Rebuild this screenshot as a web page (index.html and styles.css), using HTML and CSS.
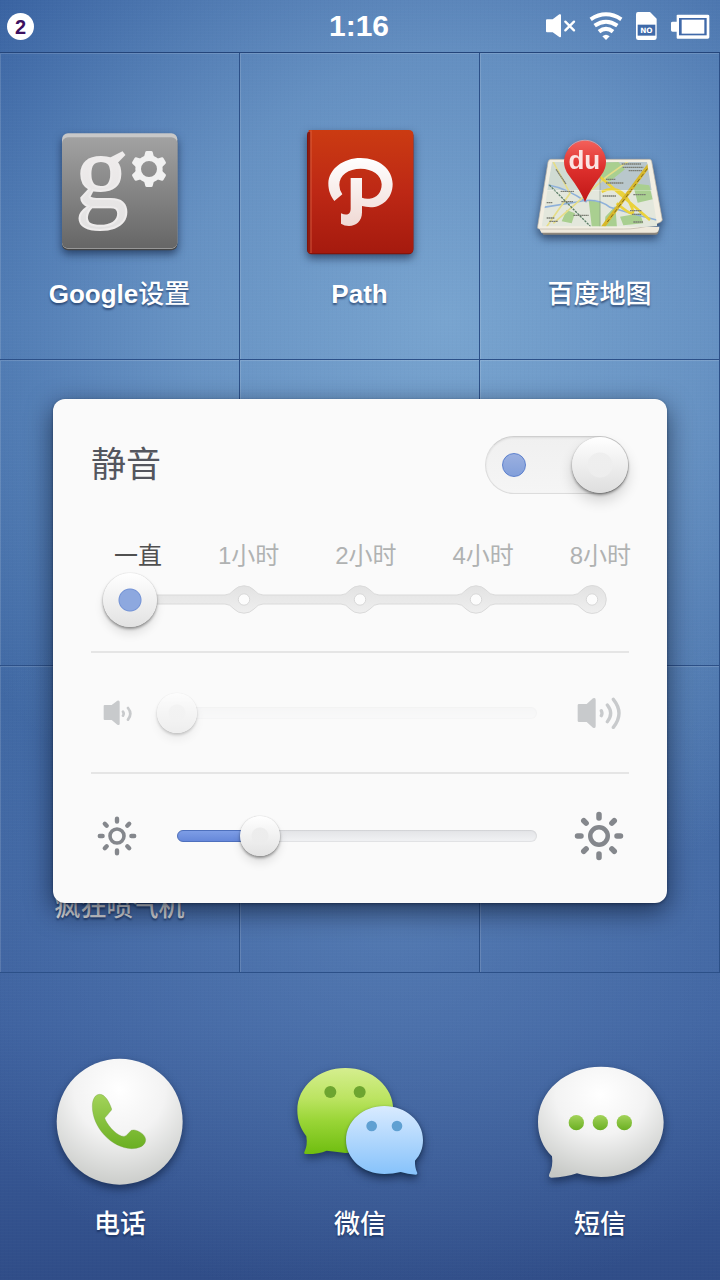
FILE: index.html
```html
<!DOCTYPE html>
<html lang="zh-CN">
<head>
<meta charset="utf-8">
<meta name="viewport" content="width=device-width, initial-scale=1">
<title>静音</title>
<link rel="stylesheet" href="styles.css">
</head>
<body>
<div class="screen">
  <header class="status">
    <span class="badge">2</span>
    <time class="clock">1:16</time>
    <div class="status-icons">
      <svg width="32" height="26" viewBox="48 38 96 78" fill="#fff" role="img" aria-label="静音">
        <path d="M54 57h17l20-15q5-2 5 3v63q0 4-5 2L71 96H54q-3 0-3-3V60q0-3 3-3z"/>
        <path d="M109 64l26 26M135 64l-26 26" stroke="#fff" stroke-width="7" stroke-linecap="round"/>
      </svg>
      <svg width="36" height="30" viewBox="172 33 108 90" fill="none" stroke="#fff" stroke-width="12" role="img" aria-label="Wi-Fi">
        <path d="M180 58q46-30 92 0"/>
        <path d="M192 77q34-24 68 0"/>
        <path d="M205 95q21-17 42 0"/>
        <path d="M215 109q11-10 22 0l-11 11z" fill="#fff" stroke="none"/>
      </svg>
      <svg width="23" height="30" viewBox="315 33 69 90" role="img" aria-label="SIM">
        <path d="M324 36h36l20 20v57q0 7-7 7h-48q-7 0-7-7V43q0-7 6-7z" fill="#fff"/>
        <path d="M323 74h53v33h-53z" fill="#3f6aa9"/>
        <text class="sim-text" x="349" y="99" text-anchor="middle">NO</text>
      </svg>
      <svg width="42" height="27" viewBox="417 37 126 81" role="img" aria-label="电池">
        <path d="M440 44q0-2 3-2h90q5 0 5 4v64q0 4-5 4h-90q-3 0-3-3V93h-12q-5 0-5-4V67q0-4 5-4h12z" fill="#fff"/>
        <path d="M447 52h83v52h-83z" fill="#4069a9"/>
        <path d="M455 57h68v42h-68z" fill="#fff"/>
      </svg>
    </div>
  </header>

  <main class="apps">
    <a class="tile" href="#google">
      <svg class="icon" viewBox="54 30 432 432" aria-hidden="true">
        <defs>
          <linearGradient id="gp" x2="0" y2="1"><stop stop-color="#a2a2a2"/><stop offset="1" stop-color="#666"/></linearGradient>
          <linearGradient id="gw" x2="0" y2="1"><stop stop-color="#f6f2f2"/><stop offset="1" stop-color="#e2e1e1"/></linearGradient>
        </defs>
        <rect x="96" y="74" width="346" height="347" rx="18" fill="#454545"/>
        <rect x="96" y="70" width="346" height="346" rx="18" fill="#c8c8c8"/>
        <rect x="96" y="82" width="346" height="333" rx="18" fill="url(#gp)"/>
        <text class="g-mark" x="135" y="292" fill="url(#gw)" stroke="#eeecec" stroke-width="6">g</text>
        <g transform="translate(357 177)" fill="#f1f1f1">
          <path fill-rule="evenodd" d="M0-41A41 41 0 1 0 0 41A41 41 0 1 0 0-41zM0-24A24 24 0 1 1 0 24A24 24 0 1 1 0-24z"/>
          <path id="tooth" d="M-15-36L-11-51Q-10-54-7-54H7Q10-54 11-51L15-36L0-32z"/>
          <use href="#tooth" transform="rotate(60)"/><use href="#tooth" transform="rotate(120)"/><use href="#tooth" transform="rotate(180)"/><use href="#tooth" transform="rotate(240)"/><use href="#tooth" transform="rotate(300)"/>
        </g>
      </svg>
      <span class="name latin">Google<span class="han">设置</span></span>
    </a>
    <a class="tile" href="#path">
      <svg class="icon" viewBox="24 30 432 432" aria-hidden="true">
        <defs>
          <linearGradient id="pr" x2="0" y2="1"><stop stop-color="#cb3b12"/><stop offset=".5" stop-color="#bd2815"/><stop offset="1" stop-color="#a51a0e"/></linearGradient>
          <linearGradient id="pw" x2="0" y2="1"><stop stop-color="#fff"/><stop offset="1" stop-color="#f0d9d4"/></linearGradient>
        </defs>
        <rect x="81" y="62" width="319" height="371" rx="14" fill="#7b1209"/>
        <path d="M86 60H386q14 0 14 14V416q0 14-14 14H86z" fill="url(#pr)"/>
        <path d="M83 66h8v360h-8z" fill="#8d1a10"/>
        <path d="M93 61v368" stroke="#e7714f" stroke-width="2"/>
        <path fill="url(#pw)" d="M163 273C151 257 145 242 145 220C147 176 190 144 242 144C297 144 338 178 338 222C338 266 305 292 272 292Q257 291 246 288V307C246 334 228 348 207 348Q193 348 183 341V310C201 318 212 313 212 296V204H246V263C252 266 260 267 268 266C291 265 305 247 305 223C304 195 277 176 242 176C205 176 178 195 178 225Q178 240 187 253z"/>
      </svg>
      <span class="name latin">Path</span>
    </a>
    <a class="tile" href="#map">
      <svg class="icon" viewBox="24 0 432 432" aria-hidden="true">
        <defs>
          <clipPath id="mc"><path d="M96 126L381 126L412 318Q370 324 310 319H65z"/></clipPath>
          <linearGradient id="pin" x2="0" y2="1"><stop stop-color="#f3605a"/><stop offset=".45" stop-color="#de302d"/><stop offset="1" stop-color="#c01616"/></linearGradient>
        </defs>
        <path d="M60 330L70 344H408Q417 342 416 326z" fill="#8d867c"/>
        <path d="M56 322L64 338H404Q418 338 418 320z" fill="#efe9dc"/>
        <path d="M92 118H388Q394 118 395 124L427 300Q425 308 400 314Q350 328 310 327H58Q51 327 53 319L84 126Q86 118 92 118z" fill="#f2eee2" stroke="#bbb2a4" stroke-width="2"/>
        <g clip-path="url(#mc)">
          <path d="M50 110H430V340H50z" fill="#e3e7dc"/>
          <path d="M96 126H240V210H80z" fill="#d0dbd3"/><path d="M240 126H400V210H240z" fill="#b9c7cc"/>
          <path d="M215 130l80-4 20 22-45 36-20-8zM206 240l35 6v80h-25zM256 290l30-32 5 65h-38zM338 190l50 6 10 42-45 10zM300 290l60-10 10 30-60 6zM140 270l25 10-10 30-30-6z" fill="#a9cf90"/>
          <path d="M70 262L170 246Q230 230 270 262L340 282L410 300M85 195Q140 205 200 246" fill="none" stroke="#8eb1da" stroke-width="5"/>
          <path d="M100 126L150 220L80 320M100 310L260 170L330 120" fill="none" stroke="#e6dd88" stroke-width="5"/>
          <path d="M240 170L390 300M245 215Q300 190 330 250T290 250" fill="none" stroke="#ead23c" stroke-width="8"/>
          <path d="M388 134L245 326" stroke="#d8b82a" stroke-width="11"/>
          <path d="M382 146L262 306" stroke="#806b25" stroke-width="3" stroke-dasharray="12 7"/>
          <path d="M88 195L212 320" stroke="#5d7f68" stroke-width="4" stroke-dasharray="7 3"/>
          <path d="M108 148L138 192M305 132h58M308 142h62M326 152h40M258 178h28M258 189h52M248 228h40M340 224h38M122 214h40M124 245h36M160 286h46M80 248h18M80 294h24M330 272h34M336 283h28M340 306h30M88 304h26" stroke="#7b7e74" stroke-width="4" stroke-dasharray="5 1"/>
          <path d="M240 126V330" stroke="#7f8b83" stroke-width="3" opacity=".5"/>
          <path d="M76 211H405" stroke="#fff" stroke-width="2" opacity=".5"/>
        </g>
        <path d="M195 246L240 236L204 244z" fill="#444" opacity=".5"/>
        <path d="M195 246Q183 214 146 165A63 63 0 1 1 244 165Q207 214 195 246z" fill="url(#pin)"/>
        <path d="M145 86A62 62 0 0 1 245 86" fill="none" stroke="#ffaaa2" stroke-width="3" opacity=".7"/>
        <text class="du-mark" x="193" y="146" text-anchor="middle">du</text>
      </svg>
      <span class="name">百度地图</span>
    </a>
    <div class="tile"></div><div class="tile"></div><div class="tile"></div>
    <a class="tile" href="#game"><span class="icon"></span><span class="name dim">疯狂喷气机</span></a>
    <div class="tile"></div><div class="tile"></div>
  </main>

  <nav class="dock">
    <a class="tile" href="#phone">
      <svg class="icon" viewBox="54 30 432 432" aria-hidden="true">
        <defs>
          <radialGradient id="wb" cx=".5" cy=".25" r=".8"><stop stop-color="#fff"/><stop offset=".45" stop-color="#f3f3f3"/><stop offset="1" stop-color="#c6c8c5"/></radialGradient>
          <linearGradient id="gr" x2="0" y2="1"><stop stop-color="#a3d35a"/><stop offset="1" stop-color="#6aaf22"/></linearGradient>
        </defs>
        <circle cx="269" cy="245" r="189" fill="url(#wb)"/>
        <path d="M209 163C226 163 238 187 245 207C246 211 238 216 234 223Q227 231 224 234C229 251 254 281 274 288Q283 291 288 287L304 271Q312 268 321 272C336 278 346 287 347 299C347 318 325 326 305 326C244 324 187 262 187 199C187 179 195 163 209 163z" fill="url(#gr)" stroke="#719b40" stroke-width="1"/>
      </svg>
      <span class="name">电话</span>
    </a>
    <a class="tile" href="#wechat">
      <svg class="icon" viewBox="24 30 432 432" aria-hidden="true">
        <defs>
          <linearGradient id="wg" x2="0" y2="1"><stop stop-color="#d5ee8f"/><stop offset=".35" stop-color="#bce462"/><stop offset=".6" stop-color="#9bd638"/><stop offset="1" stop-color="#6fbd10"/></linearGradient>
          <linearGradient id="wl" x2="0" y2="1"><stop stop-color="#d9ebff"/><stop offset="1" stop-color="#86c2fb"/></linearGradient>
        </defs>
        <path d="M196 84C276 84 340 139 340 211C340 284 276 339 196 339Q164 334 140 332Q115 343 76 342Q70 341 74 334Q83 316 79 289C61 266 52 241 52 211C52 139 116 84 196 84z" fill="url(#wg)"/>
        <circle cx="151" cy="156" r="18" fill="#6da530"/><circle cx="239" cy="156" r="18" fill="#6da530"/>
        <path class="bubble" d="M313 198C377 198 429 243 429 300C429 326 420 346 405 362Q404 383 412 399Q413 404 407 404Q383 402 362 396Q339 402 313 402C249 402 198 357 198 300C198 243 249 198 313 198z" fill="url(#wl)"/>
        <circle cx="275" cy="258" r="16" fill="#5fa0d2"/><circle cx="351" cy="258" r="16" fill="#5fa0d2"/>
      </svg>
      <span class="name">微信</span>
    </a>
    <a class="tile" href="#sms">
      <svg class="icon" viewBox="24 30 432 432" aria-hidden="true">
        <path d="M243 80C347 80 431 154 431 246C431 338 347 411 243 411Q203 410 171 400Q138 412 94 413Q84 411 88 402Q100 378 96 349C68 321 54 286 54 246C54 154 138 80 243 80z" fill="url(#wb)"/>
        <g fill="url(#gr)"><circle cx="169" cy="248" r="23"/><circle cx="241" cy="248" r="23"/><circle cx="313" cy="248" r="23"/></g>
      </svg>
      <span class="name">短信</span>
    </a>
  </nav>

  <div class="overlay">
    <section class="panel" role="dialog" aria-labelledby="mute-title">
      <div class="panel-head">
        <label class="title" id="mute-title" for="mute">静音</label>
        <input class="switch" id="mute" type="checkbox" checked>
      </div>
      <div class="duration">
        <ul class="stops" id="stops">
          <li class="current">一直</li><li>1小时</li><li>2小时</li><li>4小时</li><li>8小时</li>
        </ul>
        <div class="stepper">
          <svg class="rail-stops" viewBox="0 0 516 30" aria-hidden="true">
            <defs><linearGradient id="rl" x2="0" y2="1"><stop stop-color="#e2e2e2"/><stop offset="1" stop-color="#efefef"/></linearGradient></defs>
            <path fill="url(#rl)" stroke="#dadada" d="M27 10H122Q127 10 131 5A14 14 0 0 1 151 5Q155 10 160 10H238Q243 10 247 5A14 14 0 0 1 267 5Q271 10 276 10H354Q359 10 363 5A14 14 0 0 1 383 5Q387 10 392 10H470Q475 10 479 5A14 14 0 1 1 479 24Q475 19 470 19H392Q387 19 383 24A14 14 0 0 1 363 24Q359 19 354 19H276Q271 19 267 24A14 14 0 0 1 247 24Q243 19 238 19H160Q155 19 151 24A14 14 0 0 1 131 24Q127 19 122 19H27z"/>
            <g fill="#fcfcfc" stroke="#d8d8d8"><circle cx="141" cy="14.5" r="5.7"/><circle cx="257" cy="14.5" r="5.7"/><circle cx="373" cy="14.5" r="5.7"/><circle cx="489" cy="14.5" r="5.7"/></g>
          </svg>
          <input class="range large" type="range" min="0" max="4" value="0" aria-label="静音时长" aria-describedby="stops">
        </div>
      </div>
      <div class="row volume">
        <svg width="32" height="26" viewBox="184 180 96 78" fill="#c8cacc" aria-hidden="true">
          <path d="M195 195h21l17-13q7-2 7 4v65q0 6-7 3l-17-14h-21q-3 0-3-3v-39q0-3 3-3z"/>
          <path d="M250 215q4 6 0 12M265 204q14 17 0 35" fill="none" stroke="#c8cacc" stroke-width="8" stroke-linecap="round"/>
        </svg>
        <div class="slider">
          <span class="rail"></span>
          <input class="range" type="range" value="0" disabled aria-label="音量">
        </div>
        <svg width="48" height="34" viewBox="646 168 144 102" fill="#c8cacc" aria-hidden="true">
          <path d="M658 192h23l19-17q8-4 8 4v80q0 8-8 4l-19-17h-23q-4 0-4-4v-46q0-4 4-4z"/>
          <path d="M725 212q4 8 0 15M743 195q20 25 0 50M761 178q34 42 0 84" fill="none" stroke="#c8cacc" stroke-width="10" stroke-linecap="round"/>
        </svg>
      </div>
      <div class="row brightness">
        <svg width="40" height="40" viewBox="-20 -20 40 40" aria-hidden="true">
          <g id="sun" fill="none" stroke="#84878c">
            <circle r="7" stroke-width="3.6"/>
            <path d="M0-17.2V-14.4M0 17.2V14.4M-17.2 0H-14.4M17.2 0H14.4M-12.2-12.2l1.9 1.9M12.2-12.2l-1.9 1.9M-12.2 12.2l1.9-1.9M12.2 12.2l-1.9-1.9" stroke-width="4.4" stroke-linecap="round"/>
          </g>
        </svg>
        <div class="slider">
          <span class="rail"><span class="fill" style="width:23%"></span></span>
          <input class="range" type="range" value="23" aria-label="亮度">
        </div>
        <svg width="50" height="50" viewBox="-20 -20 40 40" aria-hidden="true"><use href="#sun"/></svg>
      </div>
    </section>
  </div>
</div>
</body>
</html>
```
FILE: styles.css
```css
* { box-sizing: border-box; }

body {
  margin: 0;
  font-family: "Liberation Sans", "Noto Sans CJK SC", sans-serif;
}

.screen {
  position: relative;
  display: flex;
  flex-direction: column;
  min-height: 100vh;
  background:
    repeating-linear-gradient(0deg, rgba(255,255,255,.012) 0 1px, transparent 1px 3px),
    repeating-linear-gradient(90deg, rgba(0,20,60,.012) 0 1px, transparent 1px 4px),
    radial-gradient(ellipse 80% 46% at 62% 25%, rgba(130,174,214,.85), rgba(124,168,210,.65) 45%, transparent),
    radial-gradient(ellipse 70% 30% at 55% 72%, rgba(100,140,192,.55), transparent),
    linear-gradient(#355e9e, #416ca9 25%, #4068a3 55%, #3c5f9d 80%, #304d88);
}

.status {
  display: grid;
  grid-template-columns: 1fr auto 1fr;
  align-items: center;
  height: 53px;
  padding: 0 9px 0 7px;
  border-bottom: 1px solid #24457a;
}

.badge {
  width: 27px;
  height: 27px;
  border-radius: 50%;
  background: #fff;
  color: #3c1060;
  font-size: 20px;
  font-weight: bold;
  line-height: 28px;
  text-align: center;
}

.clock {
  color: #fff;
  font-size: 30px;
  font-weight: bold;
  line-height: 36px;
}

.status-icons {
  display: flex;
  justify-content: flex-end;
  align-items: center;
  gap: 11px;
}

.sim-text {
  font-family: "DejaVu Sans", sans-serif;
  font-size: 22px;
  font-weight: bold;
  fill: #fff;
}

.apps {
  flex: 1;
  display: grid;
  grid-template-columns: repeat(3, 1fr);
  grid-template-rows: repeat(3, 1fr);
}

.tile {
  display: flex;
  flex-direction: column;
  align-items: center;
  gap: 12px;
  padding-top: 67px;
  color: #fff;
  text-decoration: none;
}

.apps .tile {
  border-right: 1px solid #2c5088;
  border-bottom: 1px solid #2c5088;
  box-shadow: inset 1px 1px rgba(255,255,255,.14);
}

.icon {
  width: 144px;
  height: 144px;
  overflow: visible;
  filter: drop-shadow(0 4px 4px rgba(10,25,55,.6));
}

.name {
  font-size: 26px;
  font-weight: 500;
  line-height: 36px;
  text-shadow: 0 2px 2px rgba(10,30,70,.55);
}

.latin { font-weight: bold; }
.han { font-weight: 500; }
.dim { color: #dcdcdc; }

.g-mark {
  font-family: "Liberation Serif", serif;
  font-size: 320px;
}

.du-mark {
  font-size: 78px;
  font-weight: bold;
  fill: #fbe4e2;
}

.bubble { filter: drop-shadow(0 3px 5px rgba(10,40,60,.5)); }

.dock {
  display: grid;
  grid-template-columns: repeat(3, 1fr);
  height: 307px;
}

.dock .tile { padding-top: 77px; }

.overlay {
  position: absolute;
  inset: 0;
  display: flex;
  align-items: center;
  padding: 22px 53px 0;
}

.panel {
  flex: 1;
  padding: 37px 38px 5px;
  border-radius: 12px;
  background: #fafafa;
  box-shadow: 0 8px 26px rgba(0,10,30,.6), 0 1px 3px rgba(0,10,30,.4);
}

.panel-head {
  display: flex;
  justify-content: space-between;
  align-items: center;
  height: 58px;
}

.title {
  color: #54565e;
  font-size: 35px;
  line-height: 54px;
}

.switch {
  appearance: none;
  display: flex;
  justify-content: space-between;
  align-items: center;
  width: 144px;
  height: 58px;
  margin: 0;
  padding-left: 16px;
  border: 1px solid #dcdcdc;
  border-top-color: #cfcfcf;
  border-radius: 29px;
  background: linear-gradient(#f0f0f0, #f5f5f5);
  box-shadow: inset 0 1px 2px rgba(0,0,0,.08);
}

.switch::before {
  content: "";
  width: 22px;
  height: 22px;
  border: 1px solid #5c80cd;
  border-radius: 50%;
  background: linear-gradient(#9bb0e0, #829fda);
}

.switch::after {
  content: "";
  width: 56px;
  height: 56px;
  border-radius: 50%;
  background:
    radial-gradient(circle, rgba(238,238,238,.9) 12px, transparent 13px),
    linear-gradient(#fff, #dedede);
  box-shadow: 0 2px 3px rgba(0,0,0,.4), 0 8px 14px rgba(0,0,0,.16), 0 0 1px rgba(0,0,0,.2);
}

.duration {
  margin-top: 44px;
  padding-bottom: 24px;
  border-bottom: 2px solid #e5e5e5;
}

.stops {
  display: flex;
  justify-content: space-between;
  margin: 0 -2px 0 23px;
  padding: 0;
  list-style: none;
  color: #b0b2b2;
  font-size: 24px;
  line-height: 35px;
}

.current { color: #505050; }

.stepper,
.slider {
  display: grid;
  align-items: center;
}

.stepper { margin: 0 10px 0 12px; }
.stepper > *, .slider > * { grid-area: 1 / 1; }
.rail-stops { width: 100%; }

.range {
  appearance: none;
  z-index: 1;
  width: 100%;
  height: 40px;
  margin: 0;
  background: transparent;
}

.range::-webkit-slider-thumb {
  appearance: none;
  width: 40px;
  height: 40px;
  border-radius: 50%;
  background:
    radial-gradient(circle, rgba(236,236,236,.9) 8px, transparent 9px),
    linear-gradient(#fff, #e3e3e3);
  box-shadow: 0 2px 3px rgba(0,0,0,.38), 0 7px 10px rgba(0,0,0,.1), 0 0 1px rgba(0,0,0,.25);
}

.large { height: 54px; }

.large::-webkit-slider-thumb {
  width: 54px;
  height: 54px;
  background:
    radial-gradient(circle, #8da8df 10px, #7594d6 11px, transparent 12px),
    linear-gradient(#fff, #e2e2e2);
}

.row {
  display: grid;
  grid-template-columns: 51px 1fr 60px;
  align-items: center;
  justify-items: center;
}

.volume {
  height: 121px;
  border-bottom: 2px solid #e5e5e5;
}

.brightness { height: 124px; }

.slider {
  justify-self: stretch;
  margin: 0 12px 0 15px;
}

.rail {
  height: 12px;
  margin: 0 20px;
  border-radius: 6px;
  background: linear-gradient(#e2e3e6, #f2f3f5);
  box-shadow: inset 0 0 1px 1px rgba(0,0,0,.07);
}

.fill {
  display: block;
  height: 100%;
  border: 1px solid #4e70bd;
  border-radius: 6px;
  background: linear-gradient(#7d9de6, #6688da);
}

.volume .slider { opacity: .5; }
.volume .rail { opacity: .4; }
```
